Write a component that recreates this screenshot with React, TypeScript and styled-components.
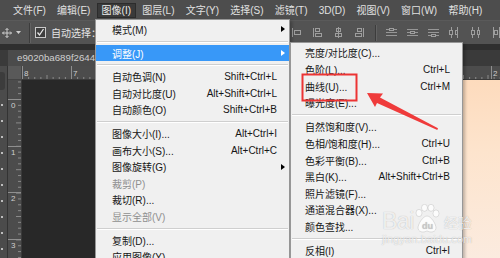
import React from 'react';
import styled, { createGlobalStyle, css } from 'styled-components';

const FONT = `"Liberation Sans", "Noto Sans CJK SC", sans-serif`;

const GlobalStyle = createGlobalStyle`
  html, body { margin: 0; padding: 0; background: #282828; }
  body { width: 500px; height: 258px; overflow: hidden; }
  #root { width: 500px; height: 258px; }
`;

const Screen = styled.div`
  position: relative;
  width: 500px;
  height: 258px;
  overflow: hidden;
  display: flex;
  flex-direction: column;
  font-family: ${FONT};
  font-size: 10px;
  background: #282828;
`;

/* ---------- menu bar ---------- */
const MenuBar = styled.div`
  height: 20px;
  flex: none;
  display: flex;
  align-items: center;
  gap: 1px;
  padding-left: 8px;
  background: #4d4d4d;
  box-sizing: border-box;
`;

const MenuBarItem = styled.div<{ $open?: boolean }>`
  height: 15px;
  line-height: 13px;
  padding: 0 4.1px;
  box-sizing: border-box;
  border: 1px solid transparent;
  color: #e0e0e0;
  white-space: nowrap;
  ${p =>
    p.$open &&
    css`
      background: #3a3a3a;
      border-color: #2c2c2c;
      color: #ededed;
    `}
`;

/* ---------- options bar ---------- */
const OptionsBar = styled.div`
  height: 24px;
  flex: none;
  display: flex;
  align-items: center;
  background: #535353;
  border-top: 1px solid #5a5a5a;
  box-sizing: border-box;
  padding-left: 2px;
  color: #e4e4e4;
`;

const ToolGlyph = styled.svg`
  flex: none;
  display: block;
`;

const BarSeparator = styled.div<{ $h?: number }>`
  width: 1px;
  height: ${p => p.$h ?? 20}px;
  background: #3c3c3c;
  box-shadow: 1px 0 0 #626262;
  flex: none;
`;

const Spacer = styled.div<{ $w: number }>`
  width: ${p => p.$w}px;
  flex: none;
`;

const CheckBox = styled.div`
  width: 9px;
  height: 9px;
  border: 1px solid #c9c9c9;
  background: #3e3e3e;
  flex: none;
  display: flex;
  align-items: center;
  justify-content: center;
`;

const OptionLabel = styled.span`
  margin-left: 5px;
  white-space: nowrap;
`;

const AlignTools = styled.div`
  margin-left: auto;
  display: flex;
  align-items: center;
  gap: 10px;
  width: 209px;
  flex: none;
`;

/* ---------- tab bar ---------- */
const TabBar = styled.div`
  height: 22px;
  flex: none;
  background: #3a3a3a;
  border-top: 6px solid #2f2f2f;
  box-sizing: border-box;
  padding-left: 8px;
  display: flex;
`;

const DocTab = styled.div`
  height: 16px;
  line-height: 16px;
  width: 87px;
  box-sizing: border-box;
  overflow: hidden;
  padding: 0 0 0 9px;
  background: #4b4b4b;
  color: #cfcfcf;
  white-space: nowrap;
  font-size: 9.7px;
`;

/* ---------- workspace ---------- */
const Workspace = styled.div`
  flex: 1;
  display: flex;
  min-height: 0;
`;

const ToolsStrip = styled.div`
  width: 8px;
  flex: none;
  background: #4b4b4b;
  border-right: 1px solid #333;
  box-sizing: border-box;
  display: flex;
  flex-direction: column;
  align-items: flex-start;
  padding-top: 6px;
  gap: 14px;
`;

const ToolButton = styled.div`
  width: 5px;
  height: 18px;
  background: #3c3c3c;
  border-radius: 0 3px 3px 0;
`;

const ToolDot = styled.div`
  width: 2px;
  height: 2px;
  background: #bdbdbd;
  margin-left: 1px;
`;

const Main = styled.div`
  flex: 1;
  display: flex;
  flex-direction: column;
  min-width: 0;
`;

const RulerRow = styled.div`
  height: 14px;
  flex: none;
  display: flex;
`;

const RulerCorner = styled.div`
  width: 14px;
  flex: none;
  background: #595959;
  border-right: 1px solid #444;
  border-bottom: 1px solid #444;
  box-sizing: border-box;
`;

const RulerSvg = styled.svg`
  display: block;
  background: #4c4c4c;
  flex: none;
`;

const Body = styled.div`
  flex: 1;
  display: flex;
  min-height: 0;
`;

const Pasteboard = styled.div`
  width: 441px;
  flex: none;
  background: #282828;
`;

const DocumentArea = styled.div`
  flex: 1;
  background: linear-gradient(180deg, #fddbbd 0%, #fde4cd 40%, #fbebdf 100%);
`;

/* ---------- menus ---------- */
const Menu = styled.div<{ $left: number; $top: number; $width: number }>`
  position: absolute;
  left: ${p => p.$left}px;
  top: ${p => p.$top}px;
  width: ${p => p.$width}px;
  background: #f0f0f0;
  border: 1px solid #979797;
  box-sizing: border-box;
  padding: 1.7px 0 4px;
  box-shadow: 2px 2px 3px rgba(0, 0, 0, 0.25);
  font-family: ${FONT};
  font-size: 10px;
`;

const Row = styled.div<{ $active?: boolean; $disabled?: boolean; $indent: number }>`
  height: 16.6px;
  display: flex;
  align-items: center;
  padding-left: ${p => p.$indent}px;
  white-space: nowrap;
  background: ${p => (p.$active ? '#3898f8' : 'transparent')};
  color: ${p => (p.$active ? '#ffffff' : p.$disabled ? '#8f8f8f' : '#161616')};
`;

const Label = styled.span`
  flex: 1;
`;

const Shortcut = styled.span`
  flex: none;
`;

const ArrowCell = styled.span`
  width: 12px;
  flex: none;
  display: flex;
  justify-content: center;
  align-items: center;
`;

const Caret = styled.span<{ $light?: boolean }>`
  width: 0;
  height: 0;
  border-left: 4px solid ${p => (p.$light ? '#ffffff' : '#000000')};
  border-top: 3.5px solid transparent;
  border-bottom: 3.5px solid transparent;
`;

const Separator = styled.div<{ $h: number }>`
  height: ${p => p.$h}px;
  display: flex;
  align-items: center;
  padding: 0 1px;
  &::before {
    content: '';
    flex: 1;
    height: 1px;
    background: #cfcfcf;
    box-shadow: 0 1px 0 #ffffff;
  }
`;

/* ---------- overlays ---------- */
const Annotation = styled.svg`
  position: absolute;
  left: 0;
  top: 0;
  pointer-events: none;
`;

const Watermark = styled.div`
  position: absolute;
  left: 382px;
  top: 203px;
  display: flex;
  flex-direction: column;
  align-items: flex-start;
  pointer-events: none;
  color: rgba(255, 255, 255, 0.78);
  text-shadow: 0 0 1px rgba(0, 0, 0, 0.28);
  font-family: "Liberation Sans", "Noto Sans CJK SC", sans-serif;
`;

const WatermarkLogo = styled.div`
  display: flex;
  align-items: flex-end;
  height: 30px;
`;

const WatermarkBai = styled.span`
  font-size: 23px;
  line-height: 23px;
  letter-spacing: -0.5px;
`;

const WatermarkJing = styled.span`
  font-size: 14px;
  line-height: 16px;
  margin-left: 4px;
  margin-bottom: 2px;
`;

const WatermarkUrl = styled.span`
  font-size: 11px;
  line-height: 11px;
  margin-top: 1px;
  letter-spacing: 0.1px;
`;

/* ---------- data ---------- */
type MenuEntry =
  | { label: string; sc?: string; arrow?: boolean; active?: boolean; disabled?: boolean }
  | 'sep';

const imageMenu: MenuEntry[] = [
  { label: '模式(M)', arrow: true },
  'sep',
  { label: '调整(J)', arrow: true, active: true },
  'sep',
  { label: '自动色调(N)', sc: 'Shift+Ctrl+L' },
  { label: '自动对比度(U)', sc: 'Alt+Shift+Ctrl+L' },
  { label: '自动颜色(O)', sc: 'Shift+Ctrl+B' },
  'sep',
  { label: '图像大小(I)...', sc: 'Alt+Ctrl+I' },
  { label: '画布大小(S)...', sc: 'Alt+Ctrl+C' },
  { label: '图像旋转(G)', arrow: true },
  { label: '裁剪(P)', disabled: true },
  { label: '裁切(R)...' },
  { label: '显示全部(V)', disabled: true },
  'sep',
  { label: '复制(D)...' },
  { label: '应用图像(Y)...' },
];

const adjustMenu: MenuEntry[] = [
  { label: '亮度/对比度(C)...' },
  { label: '色阶(L)...', sc: 'Ctrl+L' },
  { label: '曲线(U)...', sc: 'Ctrl+M' },
  { label: '曝光度(E)...' },
  'sep',
  { label: '自然饱和度(V)...' },
  { label: '色相/饱和度(H)...', sc: 'Ctrl+U' },
  { label: '色彩平衡(B)...', sc: 'Ctrl+B' },
  { label: '黑白(K)...', sc: 'Alt+Shift+Ctrl+B' },
  { label: '照片滤镜(F)...' },
  { label: '通道混合器(X)...' },
  { label: '颜色查找...' },
  'sep',
  { label: '反相(I)', sc: 'Ctrl+I' },
];

const menuTitles = ['文件(F)', '编辑(E)', '图像(I)', '图层(L)', '文字(Y)', '选择(S)', '滤镜(T)', '3D(D)', '视图(V)', '窗口(W)', '帮助(H)'];

const MenuList: React.FC<{ items: MenuEntry[]; indent: number; sepH: number }> = ({ items, indent, sepH }) => (
  <>
    {items.map((it, i) =>
      it === 'sep' ? (
        <Separator key={i} $h={sepH} />
      ) : (
        <Row key={i} $active={it.active} $disabled={it.disabled} $indent={indent}>
          <Label>{it.label}</Label>
          {it.sc && <Shortcut>{it.sc}</Shortcut>}
          <ArrowCell>{it.arrow && <Caret $light={it.active} />}</ArrowCell>
        </Row>
      )
    )}
  </>
);

/* ---------- icons ---------- */
const ICON = '#9e9e9e';

type AlignKind = 'left' | 'center' | 'right' | 'top' | 'mid' | 'bottom' | 'dl' | 'dc' | 'dr' | 'first';

const AlignIcon: React.FC<{ kind: AlignKind }> = ({ kind }) => (
  <ToolGlyph width="11" height="11" viewBox="0 0 11 11">
    {kind === 'first' && (
      <g fill="none" stroke={ICON}>
        <path d="M1.5 1v9" />
        <rect x="3.5" y="3.5" width="6" height="4" />
      </g>
    )}
    {kind === 'left' && (
      <g fill="none" stroke={ICON}>
        <path d="M1.5 1v9" />
        <rect x="3.5" y="1.5" width="4" height="3" />
        <rect x="3.5" y="6.5" width="6" height="3" />
      </g>
    )}
    {kind === 'center' && (
      <g fill="none" stroke={ICON}>
        <path d="M5.5 0v11" />
        <rect x="3.5" y="1.5" width="4" height="3" />
        <rect x="2.5" y="6.5" width="6" height="3" />
      </g>
    )}
    {kind === 'right' && (
      <g fill="none" stroke={ICON}>
        <path d="M9.5 1v9" />
        <rect x="3.5" y="1.5" width="4" height="3" />
        <rect x="1.5" y="6.5" width="6" height="3" />
      </g>
    )}
    {(kind === 'top' || kind === 'mid' || kind === 'bottom') && (
      <g fill="none" stroke={ICON}>
        <path d="M0 2.5h11M0 5.5h11M0 8.5h11" opacity={0.9} />
        <rect x="3.5" y={kind === 'top' ? 1.5 : kind === 'mid' ? 4.5 : 7.5} width="4" height="2" fill="#535353" />
      </g>
    )}
    {(kind === 'dl' || kind === 'dc' || kind === 'dr') && (
      <g fill="none" stroke={ICON}>
        <path d="M2.5 0v11M8.5 0v11" />
        <rect x={kind === 'dl' ? 0.5 : kind === 'dc' ? 1.5 : 3.5} y="3.5" width="3" height="4" fill="#535353" />
        <rect x={kind === 'dl' ? 6.5 : kind === 'dc' ? 7.5 : 8.5} y="3.5" width="2" height="4" fill="#535353" />
      </g>
    )}
  </ToolGlyph>
);

const HRuler: React.FC = () => {
  const w = 478;
  const ticks: React.ReactNode[] = [];
  for (let x = 0, i = 0; x < w; x += 6.125, i++) {
    const long = i % 4 === 0;
    ticks.push(<line key={i} x1={x + 0.5} x2={x + 0.5} y1={long ? 9 : 11} y2={14} stroke="#8a8a8a" strokeWidth={1} />);
  }
  const majors: [number, string][] = [[0, '8'], [49, '7'], [469, '2']];
  return (
    <RulerSvg width={w} height={14} viewBox={`0 0 ${w} 14`}>
      {ticks}
      {majors.map(([x, t]) => (
        <g key={t}>
          <line x1={x + 0.5} x2={x + 0.5} y1={0} y2={14} stroke="#8f8f8f" />
          <text x={x + 2} y={9.5} fontSize={8} fill="#cfcfcf" fontFamily="Liberation Sans, sans-serif">{t}</text>
        </g>
      ))}
      <line x1={0} x2={w} y1={13.5} y2={13.5} stroke="#3a3a3a" />
    </RulerSvg>
  );
};

const VRuler: React.FC = () => {
  const h = 178;
  const ticks: React.ReactNode[] = [];
  for (let y = 19 - 5.85 * 3, i = -3; y < h; y += 5.85, i++) {
    const long = ((i % 4) + 4) % 4 === 0;
    ticks.push(<line key={i} y1={y + 0.5} y2={y + 0.5} x1={long ? 8 : 10} x2={14} stroke="#8a8a8a" />);
  }
  const majors: [number, string][] = [[19, '0'], [66, '1'], [112, '2'], [159, '3']];
  return (
    <RulerSvg width={14} height={h} viewBox={`0 0 14 ${h}`}>
      {ticks}
      {majors.map(([y, t]) => (
        <g key={t}>
          <line y1={y + 0.5} y2={y + 0.5} x1={0} x2={14} stroke="#8f8f8f" />
          <text x={3} y={y + 9} fontSize={8} fill="#cfcfcf" fontFamily="Liberation Sans, sans-serif">{t}</text>
        </g>
      ))}
      <line y1={0} y2={h} x1={13.5} x2={13.5} stroke="#3a3a3a" />
    </RulerSvg>
  );
};

const toolDots = Array.from({ length: 10 }, (_, i) => i);

const App: React.FC = () => (
  <>
    <GlobalStyle />
    <Screen>
      <MenuBar>
        {menuTitles.map(t => (
          <MenuBarItem key={t} $open={t === '图像(I)'}>
            {t}
          </MenuBarItem>
        ))}
      </MenuBar>

      <OptionsBar>
        <ToolGlyph width="10" height="10" viewBox="0 0 10 10">
          <g fill="none" stroke="#cfcfcf" strokeWidth="1">
            <path d="M5 0.5v9M0.5 5h9" />
            <path d="M3.5 2L5 0.5 6.5 2M3.5 8L5 9.5 6.5 8M2 3.5L0.5 5 2 6.5M8 3.5L9.5 5 8 6.5" />
          </g>
        </ToolGlyph>
        <Spacer $w={4} />
        <ToolGlyph width="6" height="4" viewBox="0 0 6 4">
          <path d="M0 0h5L2.5 3z" fill="#cfcfcf" />
        </ToolGlyph>
        <Spacer $w={7} />
        <BarSeparator />
        <Spacer $w={5} />
        <CheckBox>
          <ToolGlyph width="9" height="9" viewBox="0 0 9 9">
            <path d="M1.5 4.5l2 2.5 4-6" fill="none" stroke="#e8e8e8" strokeWidth="1.3" />
          </ToolGlyph>
        </CheckBox>
        <OptionLabel>自动选择：</OptionLabel>
        <AlignTools>
          <AlignIcon kind="first" />
          <AlignIcon kind="left" />
          <AlignIcon kind="center" />
          <AlignIcon kind="right" />
          <BarSeparator $h={16} />
          <AlignIcon kind="top" />
          <AlignIcon kind="mid" />
          <AlignIcon kind="bottom" />
          <AlignIcon kind="dl" />
          <AlignIcon kind="dc" />
          <AlignIcon kind="dr" />
        </AlignTools>
      </OptionsBar>

      <TabBar>
        <DocTab>e9020ba689f2644</DocTab>
      </TabBar>

      <Workspace>
        <ToolsStrip>
          <ToolButton />
          {toolDots.map(i => (
            <ToolDot key={i} />
          ))}
        </ToolsStrip>
        <Main>
          <RulerRow>
            <RulerCorner />
            <HRuler />
          </RulerRow>
          <Body>
            <VRuler />
            <Pasteboard />
            <DocumentArea />
          </Body>
        </Main>
      </Workspace>

      <Menu $left={95} $top={18.5} $width={195}>
        <MenuList items={imageMenu} indent={16} sepH={7} />
      </Menu>

      <Menu $left={290} $top={42} $width={173}>
        <MenuList items={adjustMenu} indent={14} sepH={7.5} />
      </Menu>

      <Watermark>
        <WatermarkLogo>
          <WatermarkBai>Bai</WatermarkBai>
          <svg width="26" height="29" viewBox="0 0 26 29">
            <g fill="rgba(255,255,255,0.8)" stroke="rgba(120,120,120,0.35)" strokeWidth="0.6">
              <ellipse cx="5" cy="9" rx="3" ry="3.6" />
              <ellipse cx="10.5" cy="3.8" rx="3" ry="3.5" />
              <ellipse cx="17" cy="3.8" rx="3" ry="3.5" />
              <ellipse cx="22" cy="9.5" rx="3" ry="3.6" />
              <path d="M13 12c-4 0-9 8-9 12 0 3 3 4 5 4 2 0 3-1 4-1s2 1 4 1c2 0 5-1 5-4 0-4-5-12-9-12z" />
            </g>
            <text x="13.5" y="25" textAnchor="middle" fontSize="9" fill="rgba(200,200,200,0.9)" fontFamily="Liberation Sans, sans-serif" fontWeight="bold">du</text>
          </svg>
          <WatermarkJing>经验</WatermarkJing>
        </WatermarkLogo>
        <WatermarkUrl>jingyan.baidu.com</WatermarkUrl>
      </Watermark>

      <Annotation width={500} height={258} viewBox="0 0 500 258">
        <rect x="302.5" y="74.5" width="54" height="26" fill="none" stroke="#ec3434" strokeWidth="2" />
        <polygon points="367,93 383,93.5 380,97.5 438,128.3 437.3,130 377,103 375,107" fill="#ef3b3b" />
      </Annotation>
    </Screen>
  </>
);

export default App;
